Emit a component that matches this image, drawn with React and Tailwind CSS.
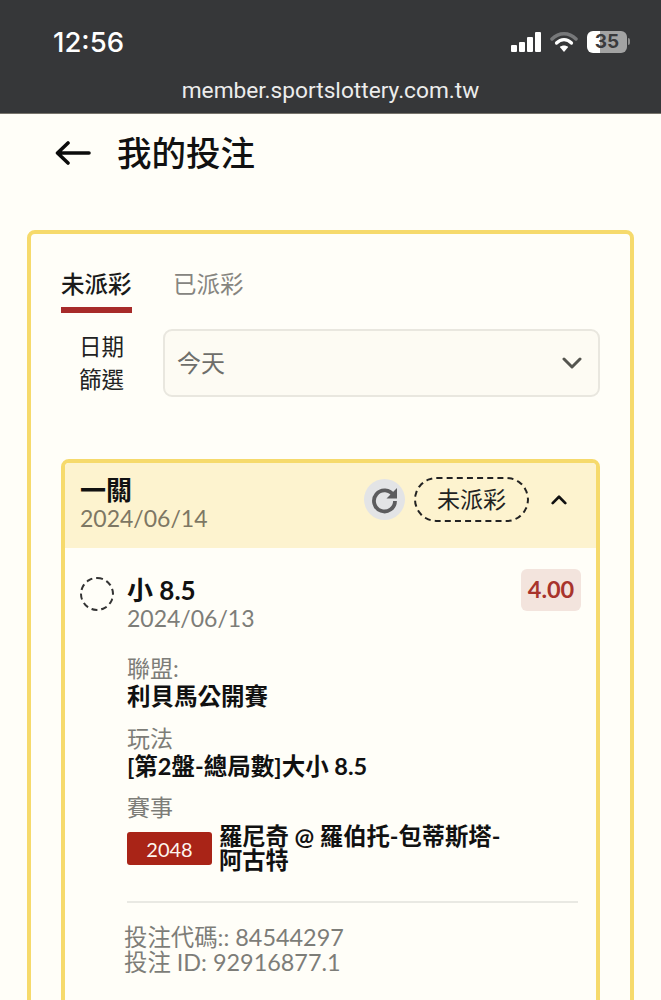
import React from "react";

const Chevron = ({ up, className }) => (
  <svg viewBox="0 0 20 12" className={className} fill="none" stroke="currentColor" strokeWidth="3" strokeLinecap="round" strokeLinejoin="round">
    <path d={up ? "M3 10 L10 3 L17 10" : "M2 2 L10 10 L18 2"} />
  </svg>
);

const InfoRow = ({ label, children, className }) => (
  <div className={className}>
    <div className="text-[23px] leading-[28px] text-[#7d7d78]">{label}</div>
    <div className="text-[23.5px] leading-[28px] font-bold text-[#111]">{children}</div>
  </div>
);

const App = () => {
  return (
    <div className="h-[1000px] overflow-hidden bg-[#fffef8] font-[family-name:Lato,'Noto_Sans_CJK_TC',sans-serif]">
      {/* browser chrome */}
      <div className="h-[114px] bg-[#363739] border-b border-[#77746c] flex flex-col text-white">
        <div className="flex items-center justify-between pt-[17px] pl-[53px] pr-[31px] h-[66px]">
          <span className="text-[27.5px] leading-[34px] font-medium font-[family-name:Inter,sans-serif]">12:56</span>
          <div className="flex items-center">
            <svg width="30" height="20" viewBox="0 0 30 20" fill="#fff">
              <rect x="0" y="13" width="6" height="7" rx="1" />
              <rect x="8" y="10" width="6" height="10" rx="1" />
              <rect x="16" y="5" width="6" height="15" rx="1" />
              <rect x="24" y="0" width="6" height="20" rx="1" />
            </svg>
            <svg width="28" height="20" viewBox="0 0 28 20" fill="none" className="ml-[9px]">
              <path d="M2 7 C9 0 19 0 26 7" stroke="#77787a" strokeWidth="3.5" strokeLinecap="round" />
              <path d="M6.5 11 C11 6.5 17 6.5 21.5 11" stroke="#fff" strokeWidth="3.2" strokeLinecap="round" />
              <path d="M14 20 L9.8 15 C12 13 16 13 18.2 15 Z" fill="#fff" />
            </svg>
            <div className="ml-[9px] w-[40px] h-[22px] rounded-[6px] bg-[linear-gradient(90deg,#fff_32%,#a3a3a3_32%)] flex items-center justify-center text-[19px] leading-none font-bold text-[#3a3a3c] font-[family-name:Inter,sans-serif]">
              35
            </div>
            <div className="ml-[1px] w-[2px] h-[7px] rounded-r-sm bg-[#8c8c8c]" />
          </div>
        </div>
        <div className="text-center text-[22.7px] leading-[28px] mt-[11px] text-[#ececec] font-[family-name:Roboto,sans-serif]">
          member.sportslottery.com.tw
        </div>
      </div>

      {/* page title */}
      <div className="flex items-center pl-[55px] h-[78px]">
        <svg width="36" height="26" viewBox="0 0 36 26" fill="none" stroke="#0b0b0b" strokeWidth="3.6" strokeLinecap="round" strokeLinejoin="round">
          <path d="M34 13 H3 M13 3 L2.5 13 L13 23" />
        </svg>
        <h1 className="ml-[26px] text-[34.5px] leading-[40px] font-medium text-[#111]">我的投注</h1>
      </div>

      {/* main card */}
      <div className="mt-[38px] mx-[27px] w-[607px] border-4 border-[#f6da6c] rounded-[8px] bg-[#fffef8] px-[30px] pt-[33px] h-[900px]">
        <div className="flex gap-[41px]">
          <div className="flex flex-col w-[71px]">
            <span className="text-[23.5px] leading-[34px] font-medium text-[#1a1a1a] whitespace-nowrap">未派彩</span>
            <span className="mt-[6px] h-[6px] bg-[#a72b2a]" />
          </div>
          <span className="text-[23.5px] leading-[34px] text-[#86857f] whitespace-nowrap">已派彩</span>
        </div>

        <div className="flex items-center mt-[16px]">
          <div className="w-[82px] pl-[18px] text-[22.5px] leading-[33px] text-[#222]">
            日期
            <br />
            篩選
          </div>
          <div className="ml-[20px] w-[437px] h-[68px] bg-[#fdfbf3] border-2 border-[#e9e7df] rounded-[9px] flex items-center justify-between pl-[12px] pr-[16px]">
            <span className="text-[24px] text-[#6e6e6a]">今天</span>
            <Chevron className="w-[20px] h-[12px] text-[#55554f]" />
          </div>
        </div>

        {/* bet card */}
        <div className="mt-[62px] w-[539px] border-4 border-[#f6da6c] rounded-[8px] overflow-hidden h-[700px]">
          <div className="h-[85px] bg-[#fdf3cf] flex items-start pl-[15px]">
            <div className="pt-[11px]">
              <div className="text-[26px] leading-[32px] font-bold text-[#111]">一關</div>
              <div className="text-[23px] leading-[25px] text-[#7d7764]">2024/06/14</div>
            </div>
            <div className="ml-auto flex items-center pt-[14px]">
              <div className="w-[41px] h-[41px] rounded-full bg-[#e3e4e6] flex items-center justify-center">
                <svg width="30" height="30" viewBox="0 0 30 30" fill="none">
                  <path d="M23.5 10.5 A10.5 10.5 0 1 0 25 16" stroke="#5c5c5e" strokeWidth="3.8" strokeLinecap="butt" />
                  <path d="M27 3 V13.5 H16.5 Z" fill="#5c5c5e" />
                </svg>
              </div>
              <div className="ml-[9px] w-[115px] h-[45px] rounded-full border-2 border-dashed border-[#222] flex items-center justify-center text-[23px] text-[#222]">
                未派彩
              </div>
              <Chevron up className="ml-[21px] mr-[28px] w-[18px] h-[11px] text-[#111]" />
            </div>
          </div>

          <div className="px-[15px] pt-[21px]">
            <div className="flex items-start">
              <div className="mt-[8px] w-[34px] h-[34px] rounded-full border-2 border-dashed border-[#333]" />
              <div className="ml-[13px] mt-[6px]">
                <div className="text-[26px] leading-[30px] font-bold text-[#111]">小 8.5</div>
                <div className="text-[23px] leading-[26px] text-[#7d7d78]">2024/06/13</div>
              </div>
              <div className="ml-auto w-[60px] h-[42px] rounded-[6px] bg-[#f3e4dd] flex items-center justify-center text-[23.5px] font-bold text-[#a8342c]">
                4.00
              </div>
            </div>

            <div className="ml-[47px]">
              <InfoRow label="聯盟:" className="mt-[23px]">利貝馬公開賽</InfoRow>
              <InfoRow label="玩法" className="mt-[14px]">[第2盤-總局數]大小 8.5</InfoRow>
              <div className="mt-[13px] text-[23px] leading-[28px] text-[#7d7d78]">賽事</div>
              <div className="flex items-start mt-[3px]">
                <div className="mt-[8px] w-[85px] h-[33px] rounded-[3px] bg-[#a92417] flex items-center justify-center text-[20px] text-[#fdf5ee] shrink-0">
                  2048
                </div>
                <div className="ml-[7px] w-[290px] text-[23.3px] leading-[24px] font-bold text-[#111]">
                  羅尼奇 @ 羅伯托-包蒂斯塔-阿古特
                </div>
              </div>
              <div className="mt-[29px] h-[2px] bg-[#e9e9e3] w-[451px]" />
              <div className="mt-[22px] -ml-[3px] text-[23.4px] leading-[25px] text-[#7d7d78]">
                <div>投注代碼:: 84544297</div>
                <div>投注 ID: 92916877.1</div>
              </div>
            </div>
          </div>
        </div>
      </div>
    </div>
  );
};

export default App;
